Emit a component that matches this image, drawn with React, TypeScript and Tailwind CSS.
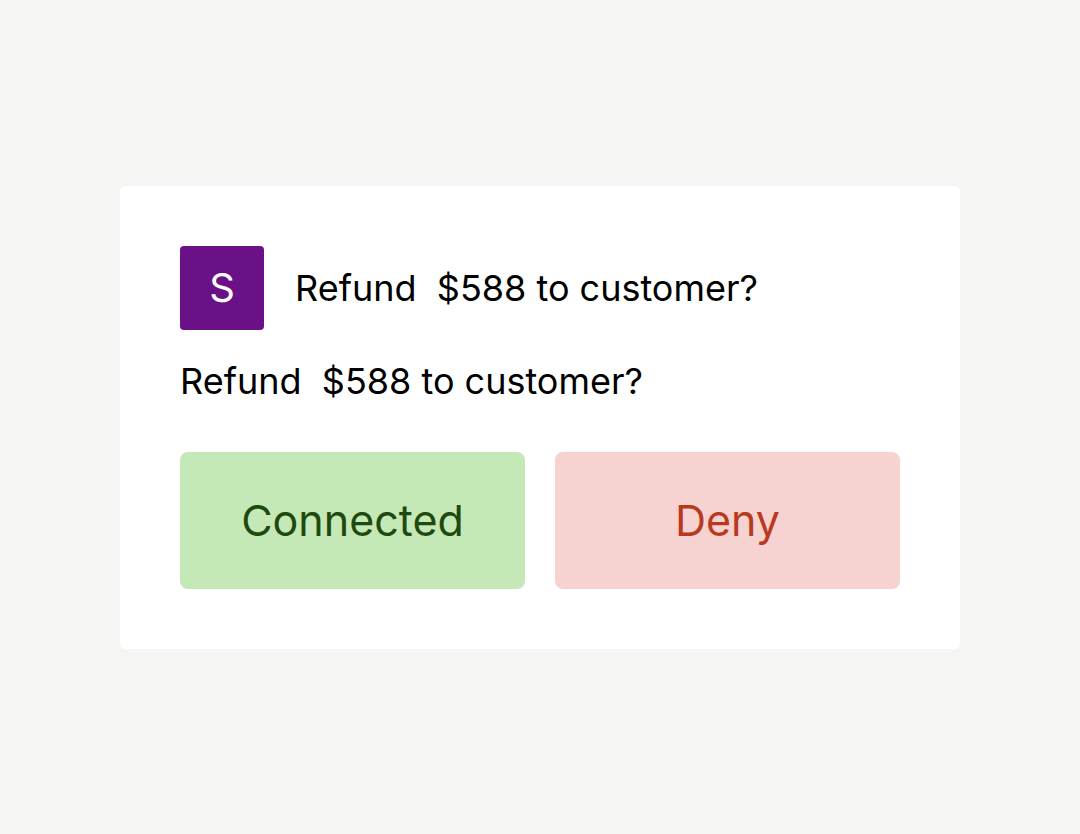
export default function App() {
  return (
    <div
      className="min-h-screen w-full flex items-center justify-center bg-[#f5f5f3]"
      style={{ fontFamily: "Inter, 'Liberation Sans', sans-serif" }}
    >
      <div className="w-[840px] bg-white rounded-[5px] p-[60px]">
        <div className="flex items-center gap-[31px]">
          <div className="w-[84px] h-[84px] rounded-[4px] bg-[#6a1188] flex items-center justify-center text-white text-[40px] leading-none">
            S
          </div>
          <p className="text-[36px] leading-[40px] text-black whitespace-pre">Refund  $588 to customer?</p>
        </div>
        <p className="mt-[31px] text-[36px] leading-[40px] text-black whitespace-pre">Refund  $588 to customer?</p>
        <div className="mt-[51px] grid grid-cols-2 gap-[30px]">
          <button className="h-[137px] rounded-[8px] bg-[#c5e8b7] text-[#1e4a10] text-[43px]">Connected</button>
          <button className="h-[137px] rounded-[8px] bg-[#f6d2d1] text-[#b83a1e] text-[43px]">Deny</button>
        </div>
      </div>
    </div>
  );
}
